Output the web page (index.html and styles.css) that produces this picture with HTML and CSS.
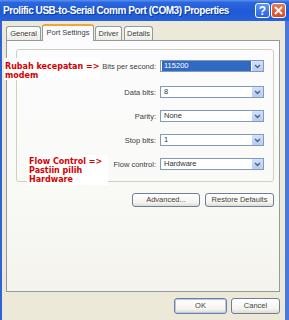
FILE: index.html
```html
<!DOCTYPE html>
<html lang="en">
  <head>
    <meta charset="UTF-8" />
    <title>Port Settings</title>
    <link rel="stylesheet" href="styles.css" />
  </head>
  <body>
    <div class="window">
      <div class="titlebar">
        <span class="title">Prolific USB-to-Serial Comm Port (COM3) Properties</span>
        <div class="tb-btns">
          <span class="tb-help">?</span>
          <span class="tb-close">
            <svg width="9" height="9" viewBox="0 0 9 9"><path d="M1 1 L8 8 M8 1 L1 8" stroke="#fff" stroke-width="1.8" /></svg>
          </span>
        </div>
      </div>

      <div class="client">
        <div class="tabs">
          <div class="tab t-general">General</div>
          <div class="tab active">Port Settings</div>
          <div class="tab t-driver">Driver</div>
          <div class="tab t-details">Details</div>
        </div>

        <div class="panel">
          <div class="frame">
            <div class="row first">
              <span class="lbl">Bits per second:</span>
              <div class="combo">
                <span class="val sel">115200</span>
                <span class="arrow"><svg width="7" height="5" viewBox="0 0 7 5"><path d="M1 1 L3.5 3.5 L6 1" fill="none" stroke="#4d6185" stroke-width="1.4" /></svg></span>
              </div>
            </div>
            <div class="row">
              <span class="lbl">Data bits:</span>
              <div class="combo">
                <span class="val">8</span>
                <span class="arrow"><svg width="7" height="5" viewBox="0 0 7 5"><path d="M1 1 L3.5 3.5 L6 1" fill="none" stroke="#4d6185" stroke-width="1.4" /></svg></span>
              </div>
            </div>
            <div class="row">
              <span class="lbl">Parity:</span>
              <div class="combo">
                <span class="val">None</span>
                <span class="arrow"><svg width="7" height="5" viewBox="0 0 7 5"><path d="M1 1 L3.5 3.5 L6 1" fill="none" stroke="#4d6185" stroke-width="1.4" /></svg></span>
              </div>
            </div>
            <div class="row">
              <span class="lbl">Stop bits:</span>
              <div class="combo">
                <span class="val">1</span>
                <span class="arrow"><svg width="7" height="5" viewBox="0 0 7 5"><path d="M1 1 L3.5 3.5 L6 1" fill="none" stroke="#4d6185" stroke-width="1.4" /></svg></span>
              </div>
            </div>
            <div class="row">
              <span class="lbl">Flow control:</span>
              <div class="combo">
                <span class="val">Hardware</span>
                <span class="arrow"><svg width="7" height="5" viewBox="0 0 7 5"><path d="M1 1 L3.5 3.5 L6 1" fill="none" stroke="#4d6185" stroke-width="1.4" /></svg></span>
              </div>
            </div>
          </div>

          <div class="btnrow">
            <div class="btn b-adv">Advanced...</div>
            <div class="btn b-restore">Restore Defaults</div>
          </div>
        </div>

        <div class="dlgbtns">
          <div class="btn b-ok">OK</div>
          <div class="btn b-cancel">Cancel</div>
        </div>
      </div>

      <!-- catatan merah di atas screenshot -->
      <div class="note note1">Rubah kecepatan =&gt;<br />modem</div>
      <div class="note note2">Flow Control =&gt;<br />Pastiin pilih<br />Hardware</div>
    </div>
  </body>
</html>
```

FILE: styles.css
```css
* {
  margin: 0px;
  padding: 0px;
  box-sizing: border-box;
}

body {
  background-color: #ece9d8;
  font-family: "Liberation Sans", Arial, sans-serif;
  font-size: 7.5px;
  color: #3c3c3c;
}

.window {
  position: relative;
  width: 289px;
  height: 320px;
  display: flex;
  flex-direction: column;
}

/* Title bar */
.titlebar {
  height: 21px;
  display: flex;
  align-items: center;
  padding-left: 3px;
  padding-right: 3px;
  background: linear-gradient(to bottom, #5a92f2 0%, #2c66dd 12%, #1f5ad6 55%, #2762da 100%);
}
.title {
  font-family: "Liberation Sans", sans-serif;
  font-weight: bold;
  font-size: 10px;
  letter-spacing: -0.45px;
  color: white;
  white-space: nowrap;
  text-shadow: 1px 1px 0 #0b3a9c;
}
.tb-btns {
  margin-left: auto;
  display: flex;
  gap: 1px;
}
.tb-help,
.tb-close {
  width: 15px;
  height: 15px;
  border: 1px solid #fff;
  border-radius: 3px;
  display: flex;
  align-items: center;
  justify-content: center;
}
.tb-help {
  background: linear-gradient(to bottom, #5d95f5, #2a62de);
  color: white;
  font-weight: bold;
  font-size: 12px;
  font-family: "Liberation Sans", sans-serif;
}
.tb-close {
  background: linear-gradient(to bottom, #eb7a55, #d84a22);
}

/* Client area */
.client {
  flex: 1;
  background-color: #ece9d8;
  border-left: 2px solid #2f62d8;
  border-right: 4px solid #4a78dc;
  padding: 3px 5px 0 4px;
}

.tabs {
  height: 16px;
  display: flex;
  align-items: flex-end;
}
.tab {
  height: 14px;
  border: 1px solid #919b9c;
  border-bottom: none;
  border-radius: 3px 3px 0 0;
  background: linear-gradient(to bottom, #ffffff, #ecebe5);
  text-align: center;
  line-height: 13px;
}
.t-general {
  width: 35px;
}
.t-driver {
  width: 27px;
  margin-left: 1px;
}
.t-details {
  width: 29px;
  margin-left: 2px;
}
.tab.active {
  position: relative;
  z-index: 2;
  width: 52px;
  height: 17px;
  margin-bottom: -1px;
  margin-left: 1px;
  background: #fcfcfe;
  border-top: 2px solid #f1a53b;
  line-height: 14px;
}

.panel {
  height: 252px;
  border: 1px solid #919b9c;
  background: linear-gradient(to bottom, #fcfcfe 0%, #f9f9f6 60%, #f4f3ee 100%);
  padding: 8px 5px 0 9px;
}

.frame {
  height: 133px;
  border: 1px solid #d0d0bf;
  border-radius: 3px;
  padding: 10px 9px 0 0;
  display: flex;
  flex-direction: column;
  gap: 12px;
}
.row {
  display: grid;
  grid-template-columns: 1fr 104px;
  column-gap: 4px;
  align-items: center;
}
.row.first {
  margin-bottom: 2px;
}
.lbl {
  text-align: right;
  white-space: nowrap;
}

.combo {
  height: 12px;
  border: 1px solid #7f9db9;
  background: #fff;
  display: flex;
  align-items: stretch;
  padding: 0 0 0 1px;
}
.val {
  flex: 1;
  padding-left: 2px;
  line-height: 10px;
  color: #333;
}
.val.sel {
  background-color: #316ac5;
  color: #fff;
  margin-right: 1px;
}
.arrow {
  width: 11px;
  background: linear-gradient(to bottom, #d4e0fb, #b9cbf4);
  display: flex;
  align-items: center;
  justify-content: center;
}

/* Buttons */
.btn {
  height: 14px;
  border: 1px solid #6f7f99;
  border-radius: 3px;
  background: linear-gradient(to bottom, #ffffff 0%, #f5f4ef 70%, #dedbd0 100%);
  text-align: center;
  line-height: 12px;
  color: #444;
}
.btnrow {
  display: flex;
  justify-content: flex-end;
  gap: 5px;
  margin-top: 11px;
}
.b-adv {
  width: 68px;
}
.b-restore {
  width: 69px;
}

.dlgbtns {
  display: flex;
  justify-content: flex-end;
  gap: 4px;
  margin-top: 6px;
}
.dlgbtns .btn {
  height: 16px;
  line-height: 14px;
}
.b-ok {
  width: 53px;
  box-shadow: inset 0 0 0 1px #b3cbf2;
}
.b-cancel {
  width: 49px;
}

/* Catatan merah */
.note {
  position: absolute;
  background: #fff;
  font-family: "DejaVu Sans", sans-serif;
  font-weight: bold;
  font-size: 8px;
  line-height: 9px;
  color: #d40000;
  white-space: nowrap;
}
.note1 {
  left: 4px;
  top: 58px;
  width: 96px;
  height: 22px;
  padding: 4px 0 0 1px;
}
.note2 {
  left: 27px;
  top: 155px;
  width: 81px;
  height: 30px;
  padding: 2px 0 0 2px;
}
```
